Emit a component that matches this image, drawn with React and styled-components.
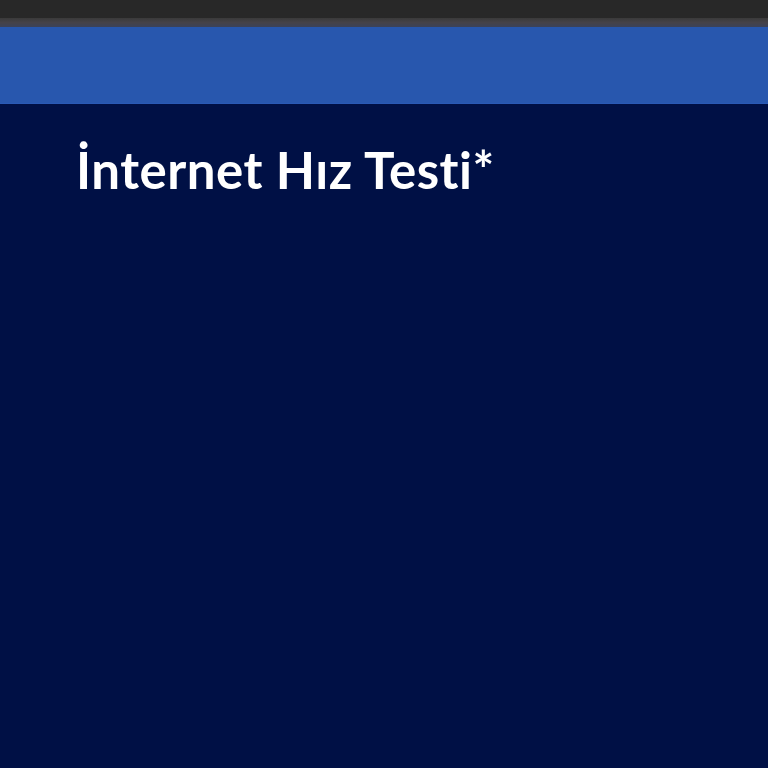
import React from 'react';
import styled, { createGlobalStyle } from 'styled-components';

const GlobalStyle = createGlobalStyle`
  html, body {
    margin: 0;
    padding: 0;
    background: #001045;
    font-family: Lato, "Noto Sans", sans-serif;
  }
`;

const Page = styled.div`
  display: flex;
  flex-direction: column;
  min-height: 768px;
  background: #001045;
`;

const TopBar = styled.div`
  height: 18px;
  background: #282828;
`;

const Divider = styled.div`
  height: 9px;
  background: linear-gradient(#3a3a3a, #454248 50%, #3c4258);
`;

const Header = styled.header`
  height: 76px;
  background: #2857ae;
  border-bottom: 1px solid #2a5ab5;
`;

const Main = styled.main`
  flex: 1;
  padding: 35px 76px;
`;

const Title = styled.h1`
  margin: 0;
  color: #ffffff;
  font-family: Lato, "Noto Sans", sans-serif;
  font-weight: 700;
  font-size: 51px;
  line-height: 61px;
  letter-spacing: 0.5px;
`;

export default function App() {
  return (
    <>
      <GlobalStyle />
      <Page>
        <TopBar />
        <Divider />
        <Header />
        <Main>
          <Title>İnternet Hız Testi*</Title>
        </Main>
      </Page>
    </>
  );
}
